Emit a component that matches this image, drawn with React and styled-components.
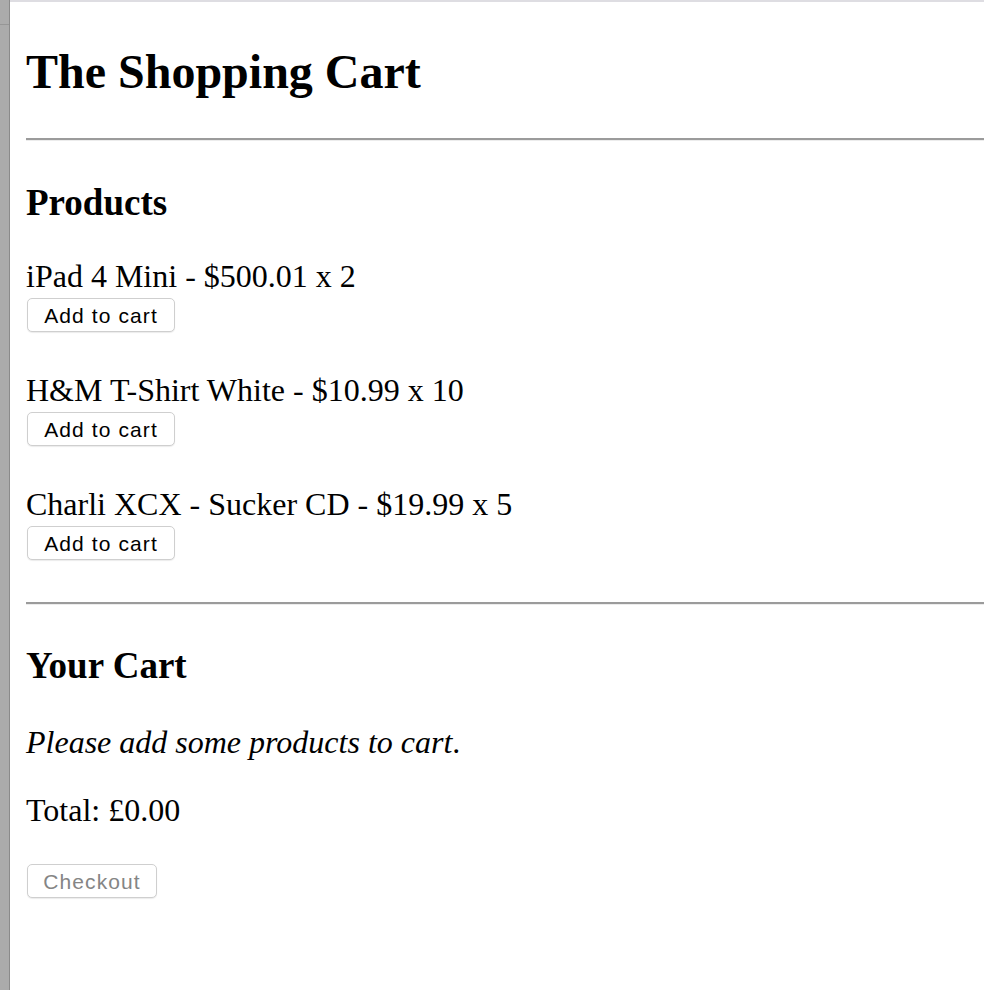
import React from "react";
import styled, { createGlobalStyle } from "styled-components";

const Global = createGlobalStyle`
  html, body { margin: 0; padding: 0; background: #fff; }
  body { font-family: "Liberation Serif", "Times New Roman", serif; color: #000; }
`;

const Frame = styled.div`
  display: flex;
  min-height: 990px;
  overflow: hidden;
`;

const SideStrip = styled.div`
  flex: 0 0 9px;
  background: linear-gradient(to bottom, #ababab 0, #ababab 24px, #969696 24px, #969696 25px, #ababab 25px);
  border-right: 1px solid #8a8a8a;
`;

const Viewport = styled.div`
  flex: 1;
  min-width: 0;
  border-top: 2px solid #dedde2;
`;

const Page = styled.main`
  padding: 0 0 0 16px;
`;

const Title = styled.h1`
  margin: 42px 0 0;
  font-size: 48px;
  line-height: 56px;
  font-weight: bold;
`;

const Rule = styled.hr`
  margin: ${(p) => p.$top}px 0 0;
  height: 0;
  border: none;
  border-top: 2px solid #9b9b9b;
  border-bottom: 1px solid #ececec;
`;

const SectionTitle = styled.h2`
  margin: ${(p) => p.$top}px 0 0;
  font-size: 37px;
  line-height: 41px;
  font-weight: bold;
`;

const ProductList = styled.div`
  display: flex;
  flex-direction: column;
  gap: 40px;
  margin-top: 35px;
`;

const Product = styled.div`
  display: flex;
  flex-direction: column;
  align-items: flex-start;
  gap: 3px;
`;

const Line = styled.div`
  font-size: 32px;
  line-height: 37px;
  font-style: ${(p) => (p.$italic ? "italic" : "normal")};
  margin-top: ${(p) => p.$top || 0}px;
`;

const Button = styled.button`
  box-sizing: border-box;
  width: ${(p) => p.$w}px;
  height: 34px;
  margin: 0 0 0 1px;
  margin-top: ${(p) => p.$top || 0}px;
  padding: 1px 0 0;
  background: #fff;
  border: 1px solid #cfcfcf;
  border-radius: 5px;
  box-shadow: 0 1px 1px rgba(0, 0, 0, 0.08);
  font-family: "Liberation Sans", Arial, sans-serif;
  font-size: 21px;
  letter-spacing: 1.1px;
  color: ${(p) => (p.disabled ? "#858585" : "#000")};
  text-align: center;
  cursor: ${(p) => (p.disabled ? "default" : "pointer")};
`;

const products = [
  { id: 1, title: "iPad 4 Mini", price: 500.01, inventory: 2 },
  { id: 2, title: "H&M T-Shirt White", price: 10.99, inventory: 10 },
  { id: 3, title: "Charli XCX - Sucker CD", price: 19.99, inventory: 5 },
];

export default function App() {
  return (
    <>
      <Global />
      <Frame>
        <SideStrip />
        <Viewport>
          <Page>
            <Title>The Shopping Cart</Title>
            <Rule $top={38} />
            <SectionTitle $top={41}>Products</SectionTitle>
            <ProductList>
              {products.map((p) => (
                <Product key={p.id}>
                  <Line>
                    {p.title} - ${p.price} x {p.inventory}
                  </Line>
                  <Button $w={148}>Add to cart</Button>
                </Product>
              ))}
            </ProductList>
            <Rule $top={42} />
            <SectionTitle $top={40}>Your Cart</SectionTitle>
            <Line $italic $top={38}>
              Please add some products to cart<span style={{ fontStyle: "normal" }}>.</span>
            </Line>
            <Line $top={31}>Total: £0.00</Line>
            <Button $w={130} $top={35} disabled>
              Checkout
            </Button>
          </Page>
        </Viewport>
      </Frame>
    </>
  );
}
